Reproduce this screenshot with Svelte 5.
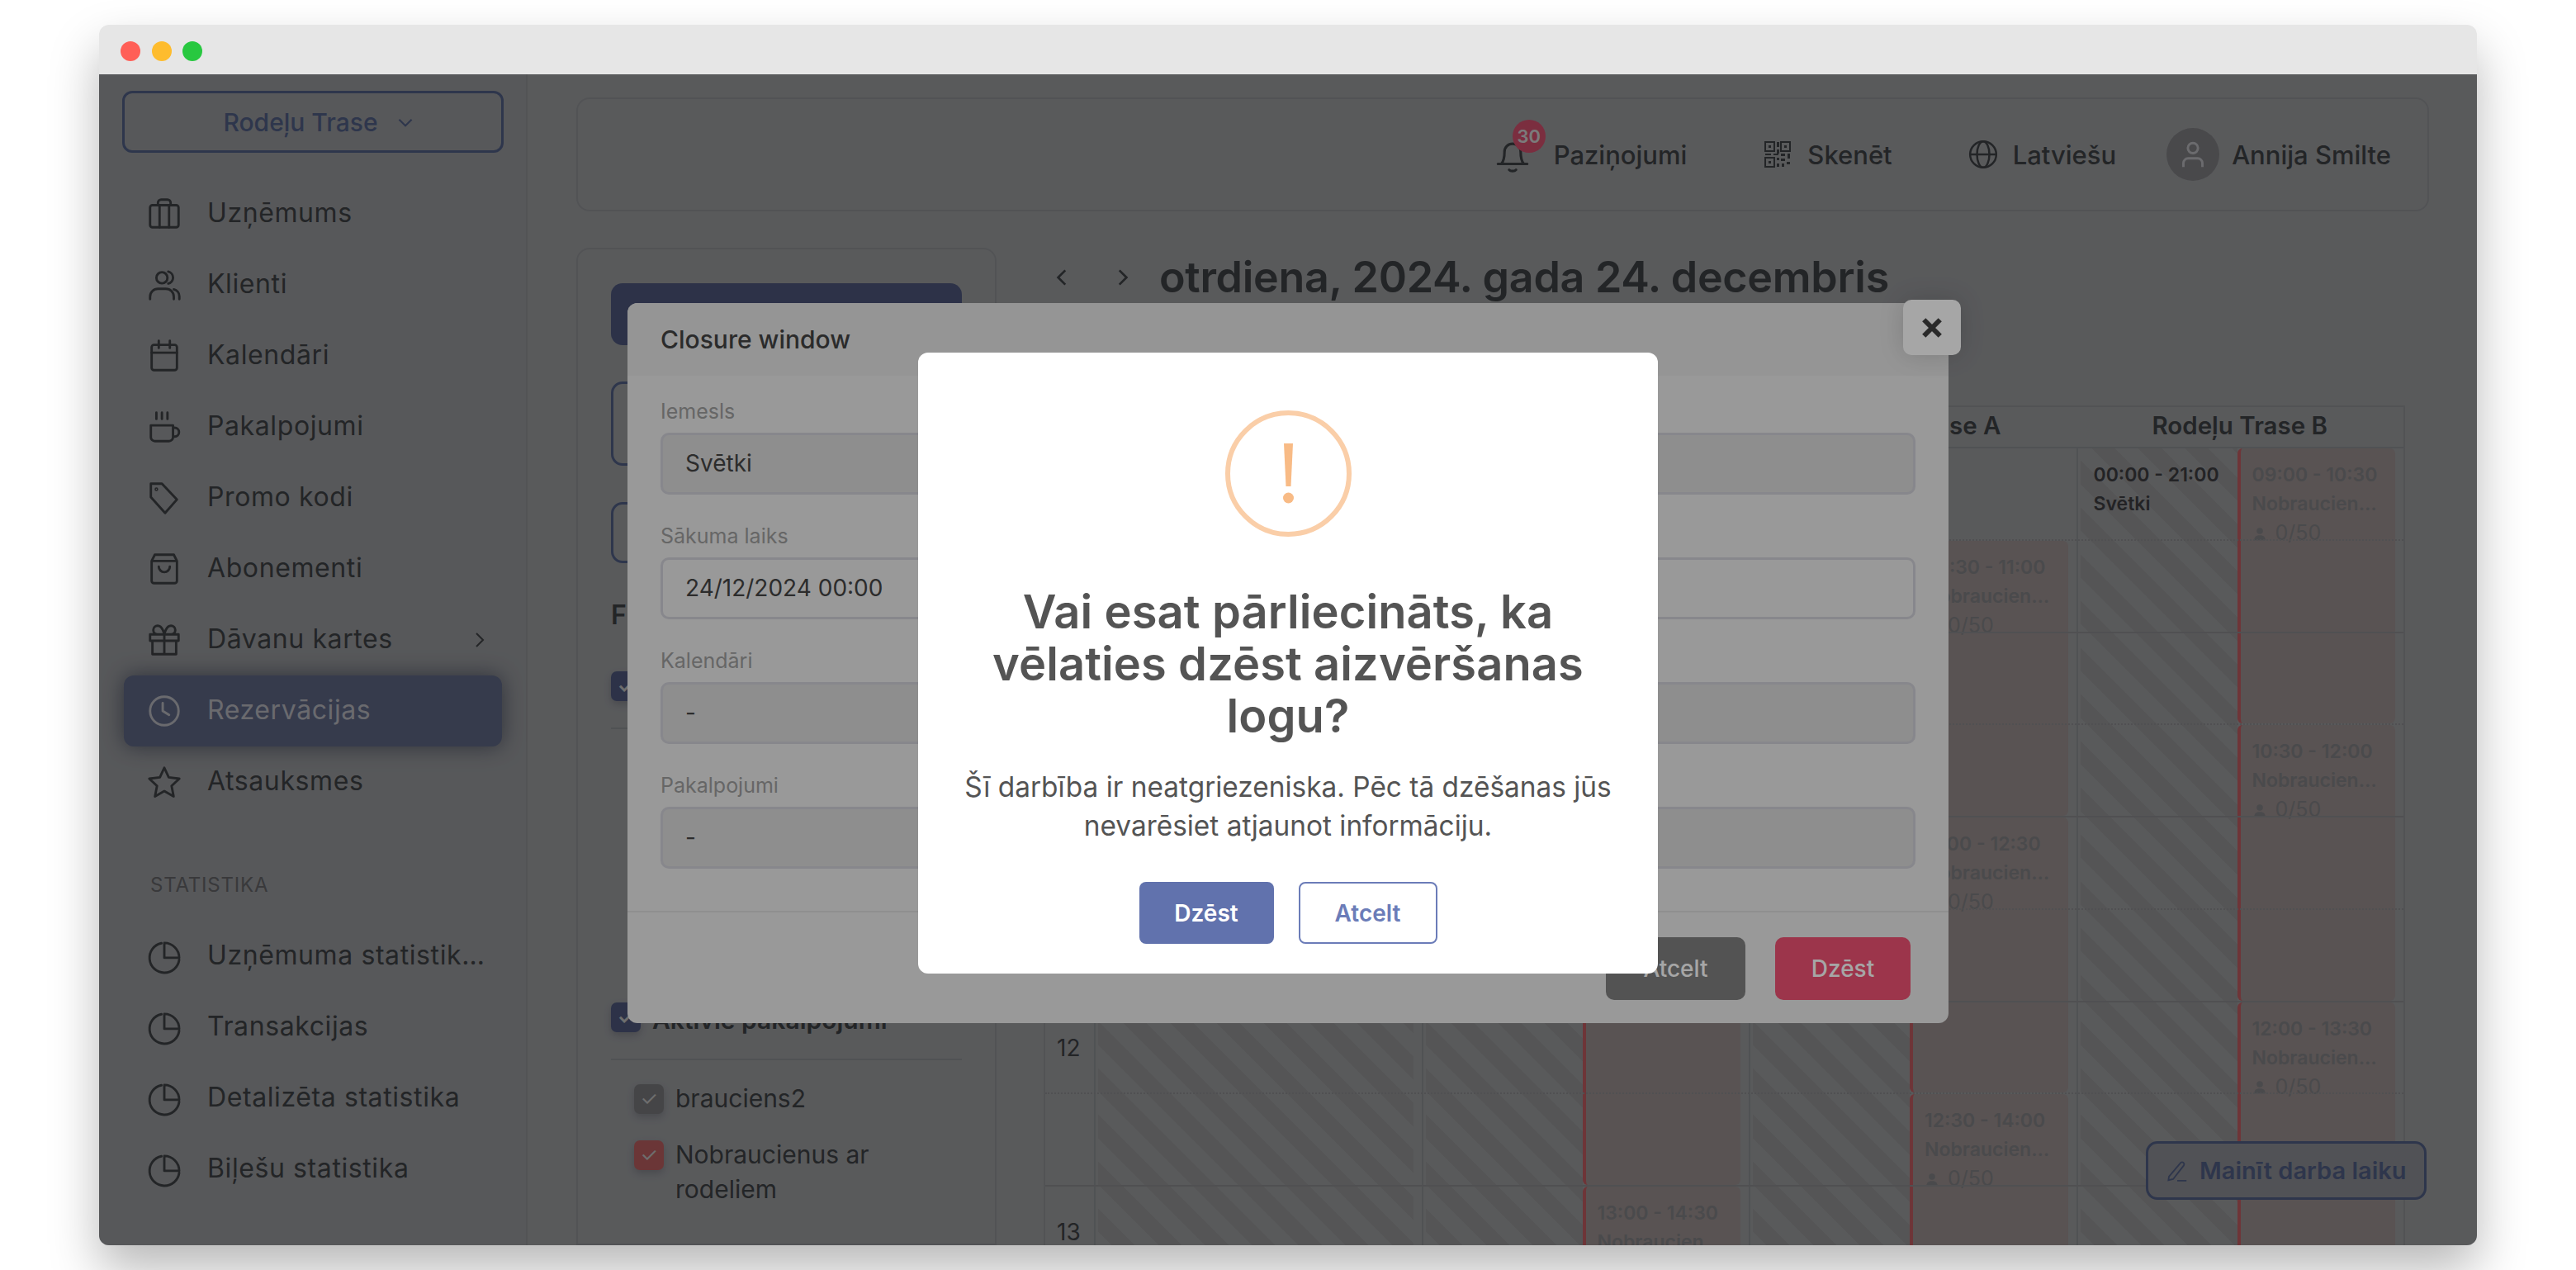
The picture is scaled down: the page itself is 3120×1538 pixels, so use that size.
<script>
  const nav = [
    { label: 'Uzņēmums', icon: 'case' },
    { label: 'Klienti', icon: 'users' },
    { label: 'Kalendāri', icon: 'cal' },
    { label: 'Pakalpojumi', icon: 'cup' },
    { label: 'Promo kodi', icon: 'tag' },
    { label: 'Abonementi', icon: 'bag' },
    { label: 'Dāvanu kartes', icon: 'gift', more: true },
    { label: 'Rezervācijas', icon: 'clock', active: true },
    { label: 'Atsauksmes', icon: 'star' }
  ];
  const stats = ['Uzņēmuma statistik…', 'Transakcijas', 'Detalizēta statistika', 'Biļešu statistika'];

  // rows are half hours starting at 09:00
  const calendars = [
    { name: 'Rodeļu Trase', split: false, events: [] },
    { name: 'Rodeļu Trase', split: true, events: [
      { time: '10:00 - 11:30', start: 3, span: 3 },
      { time: '11:30 - 13:00', start: 6, span: 3 },
      { time: '13:00 - 14:30', start: 9, span: 3 }
    ] },
    { name: 'Rodeļu Trase A', split: true, events: [
      { time: '09:30 - 11:00', start: 2, span: 3 },
      { time: '11:00 - 12:30', start: 5, span: 3 },
      { time: '12:30 - 14:00', start: 8, span: 3 }
    ] },
    { name: 'Rodeļu Trase B', split: true, closure: true, events: [
      { time: '09:00 - 10:30', start: 1, span: 3 },
      { time: '10:30 - 12:00', start: 4, span: 3 },
      { time: '12:00 - 13:30', start: 7, span: 3 }
    ] }
  ];
  const hours = [9, 10, 11, 12, 13];
  const halves = Array.from({ length: 10 }, (_, i) => i);
</script>

{#snippet icon(name)}
  <svg class="ico" viewBox="0 0 24 24">
    {#if name === 'case'}
      <rect x="3" y="6.500" width="18" height="14" rx="1.500" /><path d="M8 6.500V5a2 2 0 0 1 2-2h4a2 2 0 0 1 2 2v1.500M9 6.500v14M15 6.500v14" />
    {:else if name === 'users'}
      <circle cx="10.500" cy="7.500" r="3.500" /><path d="M14.500 3.600a3.900 3.900 0 0 1 0 7.600M3 21v-1.500a5 5 0 0 1 5-5h5a5 5 0 0 1 5 5V21M18 14.800a4.500 4.500 0 0 1 3.500 4.400V21" />
    {:else if name === 'cal'}
      <rect x="4" y="5" width="16" height="16" rx="1.500" /><path d="M4 10h16M8.500 2.500V7M15.500 2.500V7" />
    {:else if name === 'cup'}
      <path d="M3.500 11h14v7.500a2.500 2.500 0 0 1-2.500 2.500H6a2.500 2.500 0 0 1-2.500-2.500ZM17.500 12.500h1a2.800 2.800 0 0 1 0 5.600h-1M7 3v4M10.500 3v4M14 3v4" />
    {:else if name === 'tag'}
      <path d="M3.500 3h7l9.500 10-7.500 8.500L3.500 11.500Z" /><circle cx="7" cy="6.500" r=".4" />
    {:else if name === 'bag'}
      <path d="M4 7h16v12.500a1.500 1.500 0 0 1-1.500 1.500h-13A1.500 1.500 0 0 1 4 19.500ZM4 7l2-4h12l2 4M8.500 10.500a3.500 3.500 0 0 0 7 0" />
    {:else if name === 'gift'}
      <path d="M3 8.500h18v4H3ZM4.500 12.500V21h15v-8.500M12 8.500V21M12 8.500S11 3 7.800 3a2.700 2.700 0 0 0 0 5.500M12 8.500S13 3 16.200 3a2.700 2.700 0 0 1 0 5.500" />
    {:else if name === 'clock'}
      <circle cx="12" cy="12" r="9" /><path d="M11 7v5l4 2.500" />
    {:else if name === 'star'}
      <path d="m12 3 2.800 6.100 6.700.8-4.900 4.600 1.300 6.600L12 17.800l-5.900 3.300 1.300-6.600-4.900-4.600 6.700-.8Z" />
    {:else if name === 'pie'}
      <path d="M10.200 3.800A9.400 9.400 0 1 0 21.400 14.200" /><path d="M12 3.600V13h9.400A9.400 9.400 0 0 0 12 3.600Z" />
    {/if}
  </svg>
{/snippet}

<div class="page">
  <div class="window">
    <div class="titlebar">
      <span class="dot red"></span><span class="dot amber"></span><span class="dot green"></span>
    </div>

    <div class="app">
      <aside class="sidebar">
        <button class="company">Rodeļu Trase
          <svg viewBox="0 0 24 24" class="chev"><path d="m5 9 7 7 7-7" /></svg>
        </button>
        <nav class="nav first">
          {#each nav as item}
            <div class="nav-item" class:active={item.active}>
              {@render icon(item.icon)}
              <span>{item.label}</span>
              {#if item.more}
                <svg viewBox="0 0 24 24" class="more"><path d="m8 4 8 8-8 8" /></svg>
              {/if}
            </div>
          {/each}
        </nav>
        <div class="nav-title">STATISTIKA</div>
        <nav class="nav">
          {#each stats as label}
            <div class="nav-item">
              {@render icon('pie')}
              <span class="ellipsis">{label}</span>
            </div>
          {/each}
        </nav>
      </aside>

      <main class="main">
        <header class="topbar">
          <div class="top-item bell">
            <svg class="ico" viewBox="0 0 24 24"><path d="M3.500 17.500h17M5.500 17.500c1.200-1.500 1.800-3.500 1.800-7a4.700 4.700 0 0 1 9.400 0c0 3.500.6 5.500 1.800 7M10 21c.8.9 3.200.9 4 0" /></svg>
            <span class="badge">30</span>
            Paziņojumi
          </div>
          <div class="top-item qr-item">
            <svg class="qr" viewBox="0 0 32 32">
              <path d="M1 1h11v11H1ZM20 1h11v11H20ZM1 20h11v11H1Z" />
              <path class="solid" d="M5 5h3v3H5ZM24 5h3v3h-3ZM5 24h3v3H5ZM15 1h3v6h-3ZM15 10h3v5h-3ZM1 15h7v2H1ZM11 15h6v2h-6ZM20 15h5v3h-5ZM28 15h3v6h-3ZM15 20h3v3h-3ZM20 21h5v3h-5ZM15 27h3v4h-3ZM21 27h3v4h-3ZM27 25h4v3h-4Z" />
            </svg>
            Skenēt
          </div>
          <div class="top-item globe">
            <svg class="ico" viewBox="0 0 24 24"><circle cx="12" cy="12" r="9.500" /><ellipse cx="12" cy="12" rx="4.500" ry="9.500" /><path d="M2.500 12h19" /></svg>
            Latviešu
          </div>
          <div class="top-item user">
            <span class="avatar">
              <svg viewBox="0 0 24 24"><circle cx="12" cy="8" r="3.200" /><path d="M6 20v-2.500a3 3 0 0 1 3-3h6a3 3 0 0 1 3 3V20" /></svg>
            </span>
            Annija Smilte
          </div>
        </header>

        <div class="content">
          <section class="filters">
            <button class="primary">Izveidot</button>
            <button class="outline tall">Kalendārs</button>
            <button class="outline">Šodien</button>
            <h3>Filtri</h3>
            <div class="check-row head"><span class="check blue">✓</span>Aktīvie kalendāri</div>
            <div class="rule"></div>
            <div class="spacer"></div>
            <div class="check-row head"><span class="check blue">✓</span>Aktīvie pakalpojumi</div>
            <div class="rule"></div>
            <div class="check-row sub"><span class="check grey">✓</span>brauciens2</div>
            <div class="check-row sub"><span class="check red-check">✓</span>Nobraucienus ar rodeliem</div>
          </section>

          <section class="calendar">
            <div class="cal-head">
              <svg viewBox="0 0 24 24" class="nav-arrow"><path d="m15 4-8 8 8 8" /></svg>
              <svg viewBox="0 0 24 24" class="nav-arrow"><path d="m9 4 8 8-8 8" /></svg>
              <h1>otrdiena, 2024. gada 24. decembris</h1>
            </div>
            <div class="table">
              <div class="table-head">
                <div class="gutter"></div>
                {#each calendars as cal}
                  <div class="cal-name">{cal.name}</div>
                {/each}
              </div>
              <div class="table-body">
                <div class="gutter hours">
                  {#each hours as h}<div class="hour">{h}</div>{/each}
                </div>
                {#each calendars as cal}
                  <div class="col" class:split={cal.split}>
                    <div class="stripes">
                      {#if cal.closure}
                        <div class="closure"><b>00:00 - 21:00</b><b>Svētki</b></div>
                      {/if}
                    </div>
                    {#if cal.split}
                      <div class="events">
                        {#each cal.events as ev}
                          <div class="event" style="grid-row: {ev.start} / span {ev.span}">
                            <b>{ev.time}</b>
                            <b class="ellipsis">Nobraucienus ar rodeliem</b>
                            <span class="cap"><svg viewBox="0 0 24 24"><circle cx="12" cy="8" r="5" /><path d="M3 23c0-6 4-8 9-8s9 2 9 8Z" /></svg>0/50</span>
                          </div>
                        {/each}
                      </div>
                    {/if}
                  </div>
                {/each}
                <div class="lines">
                  {#each halves as i}<div class="line" class:dotted={i % 2 === 0}></div>{/each}
                </div>
              </div>
            </div>
            <button class="change">
              <svg viewBox="0 0 24 24"><path d="M4 17.500 15.500 4a2 2 0 0 1 3 2.500L8 20l-4.500 1ZM12 21.500h9" /></svg>
              Mainīt darba laiku
            </button>
          </section>
        </div>
      </main>

      <!-- first dialog, dimmed by the confirm on top of it -->
      <div class="backdrop">
        <div class="closure-modal">
          <button class="close" aria-label="Aizvērt">
            <svg viewBox="0 0 24 24"><path d="M3 3l18 18M21 3 3 21" /></svg>
          </button>
          <div class="modal-head">Closure window</div>
          <div class="modal-body">
            <label>Iemesls<div class="field off">Svētki</div></label>
            <label>Sākuma laiks<div class="field">24/12/2024 00:00</div></label>
            <label>Kalendāri<div class="field off">-</div></label>
            <label>Pakalpojumi<div class="field off">-</div></label>
          </div>
          <div class="modal-foot">
            <button class="btn-grey">Atcelt</button>
            <button class="btn-red">Dzēst</button>
          </div>
        </div>
      </div>

      <div class="backdrop top">
        <div class="confirm">
          <svg class="warn" viewBox="0 0 153 153">
            <circle class="warn-ring" cx="76.500" cy="76.500" r="73.500" />
            <path d="M71 40h11l-2.500 52h-6Z" />
            <circle cx="76.500" cy="106" r="6.500" />
          </svg>
          <h2>Vai esat pārliecināts, ka vēlaties dzēst aizvēršanas logu?</h2>
          <p>Šī darbība ir neatgriezeniska. Pēc tā dzēšanas jūs nevarēsiet atjaunot informāciju.</p>
          <div class="confirm-actions">
            <button class="yes">Dzēst</button>
            <button class="no">Atcelt</button>
          </div>
        </div>
      </div>
    </div>
  </div>
</div>

<style>
  :global(body) {
    margin: 0;
    background: #fff;
  }

  .page {
    width: 3120px;
    height: 1538px;
    padding: 30px 120px;
    box-sizing: border-box;
    font-family: Inter, "Liberation Sans", sans-serif;
    overflow: hidden;
  }

  button {
    font-family: inherit;
  }

  .window {
    height: 1478px;
    border-radius: 12px;
    overflow: hidden;
    display: flex;
    flex-direction: column;
    box-shadow: 0 30px 60px rgba(0, 0, 0, 0.28);
  }

  .titlebar {
    height: 60px;
    flex: none;
    box-sizing: border-box;
    background: #e6e6e6;
    display: flex;
    align-items: center;
    gap: 13.5px;
    padding: 4px 0 0 26px;
  }

  .dot {
    width: 24px;
    height: 24px;
    border-radius: 50%;
  }
  .red { background: #ff5f57; }
  .amber { background: #febc2e; }
  .green { background: #28c840; }

  .app {
    position: relative;
    flex: 1;
    display: flex;
    background: #b9bbbf;
    color: #4b4d51;
    overflow: hidden;
    min-height: 0;
  }

  .backdrop {
    position: absolute;
    inset: 0;
    background: rgba(0, 0, 0, 0.26);
  }
  .backdrop.top {
    background: rgba(0, 0, 0, 0.35);
  }

  /* sidebar */
  .sidebar {
    width: 519px;
    flex: none;
    box-sizing: border-box;
    padding: 20px 30px 0 28px;
    border-right: 2px solid #abadb1;
    background: #b5b7bb;
  }

  .company {
    width: 462px;
    height: 75px;
    display: flex;
    align-items: center;
    justify-content: center;
    gap: 20px;
    padding: 0 0 0 16px;
    background: none;
    border: 3px solid #62719f;
    border-radius: 12px;
    color: #62719f;
    font-size: 30px;
    font-weight: 500;
  }

  .chev {
    width: 26px;
    height: 26px;
    fill: none;
    stroke: currentColor;
    stroke-width: 2;
  }

  .nav {
    display: flex;
    flex-direction: column;
    width: 458px;
    margin-left: 2px;
  }
  .nav.first {
    margin-top: 31px;
  }

  .nav-item {
    height: 86px;
    flex: none;
    box-sizing: border-box;
    display: flex;
    align-items: center;
    gap: 31px;
    padding: 0 18px 0 30px;
    border-radius: 12px;
    font-size: 32px;
    letter-spacing: 0.6px;
  }
  .nav-item > span {
    flex: 1;
    min-width: 0;
    margin-top: -3px;
    line-height: 44px;
  }
  .nav-item.active {
    background: #717ba0;
    color: #dcdee5;
    box-shadow: 0 0 26px rgba(40, 48, 80, 0.6);
  }

  .ico {
    width: 46px;
    height: 46px;
    margin: 0 -2px 0 -4px;
    flex: none;
    fill: none;
    stroke: currentColor;
    stroke-width: 1.5;
    stroke-linejoin: round;
    stroke-linecap: round;
  }

  .more {
    width: 24px;
    height: 24px;
    margin-right: -3px;
    flex: none;
    fill: none;
    stroke: currentColor;
    stroke-width: 2;
  }

  .ellipsis {
    display: block;
    overflow: hidden;
    white-space: nowrap;
    text-overflow: ellipsis;
  }

  .nav-title {
    margin: 68px 0 29px 34px;
    font-size: 24px;
    line-height: 28px;
    color: #77777b;
    letter-spacing: 0.8px;
  }

  /* main */
  .main {
    flex: 1;
    min-width: 0;
    padding: 28px 58px 0 59px;
    display: flex;
    flex-direction: column;
  }

  .topbar {
    height: 138px;
    flex: none;
    box-sizing: border-box;
    border: 2px solid #abadb1;
    border-radius: 16px;
    display: flex;
    align-items: center;
    justify-content: flex-end;
    padding-right: 44px;
    font-size: 31px;
    font-weight: 500;
  }

  .top-item {
    display: flex;
    align-items: center;
    position: relative;
  }
  .bell {
    gap: 25px;
    margin-right: 94px;
  }
  .bell .ico {
    width: 50px;
    height: 50px;
    margin: 0;
  }
  .badge {
    position: absolute;
    left: 25px;
    top: -17px;
    width: 40px;
    height: 40px;
    border-radius: 50%;
    background: #ff6085;
    color: #fff;
    font-size: 22px;
    font-weight: 600;
    display: flex;
    align-items: center;
    justify-content: center;
  }
  .qr-item {
    gap: 20px;
    margin-right: 90px;
  }
  .qr {
    width: 32px;
    height: 32px;
    fill: none;
    stroke: currentColor;
    stroke-width: 2;
  }
  .qr .solid {
    fill: currentColor;
    stroke: none;
  }
  .globe {
    gap: 16px;
    margin-right: 61px;
  }
  .globe .ico {
    width: 40px;
    height: 40px;
    margin: 0;
  }
  .user {
    gap: 15px;
  }
  .avatar {
    width: 64px;
    height: 64px;
    border-radius: 50%;
    background: #98989c;
    display: flex;
    align-items: center;
    justify-content: center;
  }
  .avatar svg {
    width: 46px;
    height: 46px;
    fill: none;
    stroke: #dfdfe5;
    stroke-width: 1.5;
  }

  .content {
    flex: 1;
    min-height: 0;
    margin-top: 44px;
    display: flex;
    gap: 57px;
  }

  .filters {
    width: 509px;
    flex: none;
    box-sizing: border-box;
    border: 2px solid #abadb1;
    border-radius: 16px 16px 0 0;
    padding: 41px 40px 0;
    display: flex;
    flex-direction: column;
  }
  .primary {
    height: 75px;
    flex: none;
    border: none;
    border-radius: 14px;
    background: #5e6a96;
    color: #fff;
    font-size: 26px;
  }
  .outline {
    height: 74px;
    flex: none;
    margin-top: 44px;
    border: 3px solid #62719f;
    border-radius: 14px;
    background: none;
    color: #62719f;
    font-size: 26px;
  }
  .outline.tall {
    height: 102px;
  }
  .filters h3 {
    margin: 43px 0 48px;
    font-size: 32px;
    line-height: 40px;
    font-weight: 600;
  }
  .check-row {
    display: flex;
    gap: 14px;
    font-size: 30px;
    line-height: 42px;
    flex: none;
  }
  .check-row.head {
    font-weight: 600;
  }
  .check {
    width: 36px;
    height: 36px;
    flex: none;
    border-radius: 7px;
    font-size: 24px;
    line-height: 36px;
    text-align: center;
    color: #e4e4e6;
    box-shadow: 0 4px 10px rgba(60, 60, 80, 0.25);
  }
  .blue { background: #5e6a96; }
  .grey { background: #909094; }
  .red-check { background: #df7173; }
  .rule {
    height: 2px;
    flex: none;
    margin-top: 26px;
    background: #a8aaae;
  }
  .spacer {
    height: 331px;
    flex: none;
  }
  .check-row.sub {
    margin: 26px 0 0 28px;
  }
  .check-row.sub .check {
    margin-top: 4px;
  }
  .rule + .check-row.sub {
    margin-top: 25px;
  }

  /* calendar */
  .calendar {
    flex: 1;
    min-width: 0;
    position: relative;
    margin-right: 29px;
  }
  .cal-head {
    height: 71px;
    display: flex;
    align-items: center;
    padding-left: 10px;
    gap: 46px;
  }
  .cal-head h1 {
    margin: 0 0 0 -14px;
    font-size: 52px;
    font-weight: 600;
    letter-spacing: -0.3px;
    white-space: nowrap;
  }
  .nav-arrow {
    width: 26px;
    height: 26px;
    flex: none;
    fill: none;
    stroke: currentColor;
    stroke-width: 2.5;
  }

  .table {
    margin-top: 120px;
    border: 2px solid #abadb1;
    border-bottom: none;
  }
  .table-head {
    height: 48px;
    display: flex;
    border-bottom: 2px solid #a8aaae;
  }
  .gutter {
    width: 59px;
    flex: none;
  }
  .cal-name {
    flex: 1;
    text-align: center;
    font-size: 29.5px;
    line-height: 44px;
    font-weight: 600;
  }

  .table-body {
    position: relative;
    display: flex;
    height: 1118px;
  }
  .hours {
    display: flex;
    flex-direction: column;
  }
  .hour {
    height: 223.5px;
    flex: none;
    box-sizing: border-box;
    padding: 40px 0 0 14px;
    font-size: 28px;
    line-height: 30px;
  }
  .lines {
    position: absolute;
    inset: 0;
    display: grid;
    grid-auto-rows: 111.75px;
    pointer-events: none;
  }
  .line {
    border-bottom: 2px solid #a6a8ac;
  }
  .line.dotted {
    border-bottom-style: dotted;
  }

  .col {
    flex: 1;
    display: flex;
    padding: 0 10px 0 3px;
    border-left: 2px solid #a8aaae;
    min-width: 0;
  }
  .stripes {
    flex: 1;
    min-width: 0;
    background: repeating-linear-gradient(45deg, #b1b1b2 0 20px, #b9bbbe 20px 40px);
  }
  .col.split .stripes {
    flex: 0 0 190px;
  }
  .closure {
    padding: 15px 0 0 16px;
    display: flex;
    flex-direction: column;
    font-size: 23px;
    line-height: 35px;
    color: #49494d;
  }
  .closure b,
  .event b {
    font-weight: 600;
  }
  .events {
    flex: 1;
    min-width: 0;
    display: grid;
    grid-auto-rows: 111.75px;
  }
  .event {
    box-sizing: border-box;
    margin-bottom: 2px;
    padding: 15px 12px 0 14px;
    border-left: 4px solid #e56f75;
    border-radius: 6px;
    background: #b9adad;
    color: #9a9a9e;
    font-size: 23px;
    line-height: 35px;
    min-width: 0;
    overflow: hidden;
  }
  .event b {
    display: block;
    white-space: nowrap;
  }
  .cap {
    display: flex;
    align-items: center;
    gap: 10px;
    font-size: 25px;
  }
  .cap svg {
    width: 18px;
    height: 18px;
    fill: currentColor;
  }

  .change {
    position: absolute;
    right: -26px;
    top: 1082px;
    width: 340px;
    height: 71px;
    display: flex;
    align-items: center;
    gap: 12px;
    padding: 0 0 0 20px;
    border: 3px solid #62719f;
    border-radius: 14px;
    background: #a9abb2;
    color: #62719f;
    font-size: 29px;
    font-weight: 600;
    white-space: nowrap;
  }
  .change svg {
    width: 30px;
    height: 30px;
    flex: none;
    fill: none;
    stroke: currentColor;
    stroke-width: 1.5;
  }

  /* closure dialog */
  .closure-modal {
    position: absolute;
    left: 640px;
    top: 277px;
    width: 1600px;
    height: 872px;
    border-radius: 12px;
    background: #ebebeb;
    display: flex;
    flex-direction: column;
  }
  .close {
    position: absolute;
    right: -15px;
    top: -4px;
    width: 70px;
    height: 67px;
    border: none;
    border-radius: 10px;
    background: #fff;
    box-shadow: 0 0 30px rgba(0, 0, 0, 0.15);
    padding: 0;
    display: flex;
    align-items: center;
    justify-content: center;
  }
  .close svg {
    width: 26px;
    height: 26px;
    fill: none;
    stroke: #414141;
    stroke-width: 5.5;
  }
  .modal-head {
    height: 88px;
    flex: none;
    box-sizing: border-box;
    padding: 24px 40px 0;
    background: #e5e5e5;
    border-radius: 12px 12px 0 0;
    font-size: 30px;
    font-weight: 500;
    color: #424242;
    line-height: 40px;
  }
  .modal-body {
    flex: 1;
    padding: 27px 40px 0;
    display: flex;
    flex-direction: column;
    gap: 34px;
    border-bottom: 2px solid #dcdcdc;
  }
  .modal-body label {
    display: block;
    font-size: 25px;
    line-height: 32px;
    color: #9d9d9d;
  }
  .field {
    height: 75px;
    box-sizing: border-box;
    margin-top: 10px;
    padding-left: 27px;
    border: 3px solid #d0d0d7;
    border-radius: 10px;
    font-size: 28px;
    line-height: 69px;
    color: #444;
  }
  .field.off {
    background: #dadada;
  }
  .modal-foot {
    height: 134px;
    flex: none;
    display: flex;
    justify-content: flex-end;
    align-items: flex-start;
    gap: 36px;
    padding: 30px 46px 0 0;
    box-sizing: border-box;
  }
  .btn-grey, .btn-red {
    height: 76px;
    border: none;
    border-radius: 10px;
    color: #fff;
    font-size: 28px;
    font-weight: 500;
  }
  .btn-grey {
    width: 169px;
    background: #808080;
  }
  .btn-red {
    width: 164px;
    background: #f05273;
  }

  /* confirm */
  .confirm {
    position: absolute;
    left: 992px;
    top: 337px;
    width: 896px;
    height: 752px;
    box-sizing: border-box;
    padding: 70px 40px 0;
    border-radius: 12px;
    background: #fff;
    color: #545454;
    text-align: center;
  }
  .warn {
    display: block;
    width: 153px;
    height: 153px;
    margin: 0 auto;
    fill: #f8bb86;
  }
  .warn-ring {
    fill: none;
    stroke: #facea8;
    stroke-width: 6;
  }
  .confirm h2 {
    margin: 60px 0 0;
    font-size: 56px;
    line-height: 63px;
    font-weight: 600;
    letter-spacing: 0.1px;
  }
  .confirm p {
    margin: 31px 0 0;
    font-size: 33.4px;
    line-height: 47px;
  }
  .confirm-actions {
    margin-top: 44px;
    display: flex;
    justify-content: center;
    gap: 30px;
  }
  .yes, .no {
    height: 75px;
    border-radius: 8px;
    font-size: 28px;
    font-weight: 600;
  }
  .yes {
    width: 163px;
    border: none;
    background: #6172ad;
    color: #fff;
  }
  .no {
    width: 168px;
    border: 2px solid #6b7cb8;
    background: #fff;
    color: #6b7cb8;
  }
</style>
